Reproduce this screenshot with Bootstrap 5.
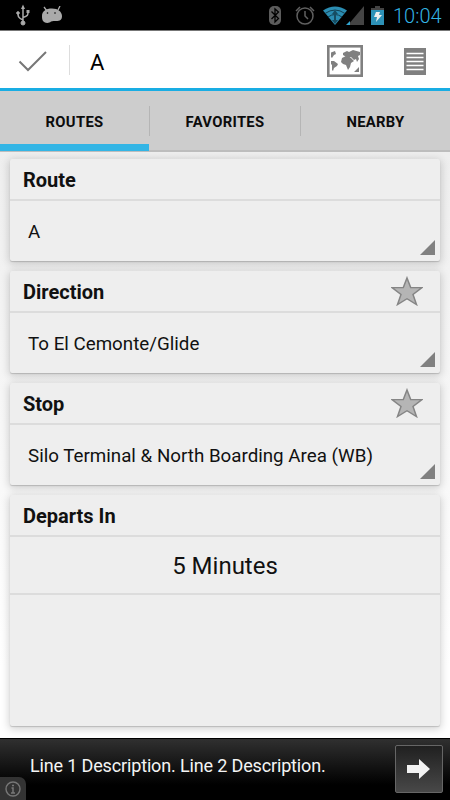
<!DOCTYPE html>
<html lang="en">
<head>
<meta charset="utf-8">
<meta name="viewport" content="width=device-width, initial-scale=1">
<title>Routes</title>
<link href="https://cdn.jsdelivr.net/npm/bootstrap@5.3.0/dist/css/bootstrap.min.css" rel="stylesheet">
<style>
body{font-family:Roboto,"Liberation Sans",sans-serif;color:#111;height:800px;overflow:hidden;background:#fff}
svg{display:block;flex:none}
.status{height:31px;background:#000;border-bottom:1px solid #777}
.usb{margin-left:16px}
.droid{margin-left:11px}
.clock{font-size:20px;line-height:30px;padding-top:2px;color:#33b5e5;font-weight:300;width:50px;margin:0 7px 0 1px;letter-spacing:0}
.actionbar{height:60px;border-bottom:3px solid #19ade3;background:#fff}
.check{margin:2px 0 0 18px}
.sep{width:1px;height:30px;margin-left:21px;background:#ddd}
.bar-title{font-size:22px;line-height:57px;padding-top:5px;margin-left:20px;color:#000}
.map-icon{margin-top:2px}
.list-icon{margin:3px 24px 0 41px}
.tabs{height:61px;background:#cdcdcd;border-bottom:2px solid #bdbdbd}
.tabs .nav-link{width:149px;height:60px;padding:1px 0 0;line-height:60px;font-size:14.8px;font-weight:700;color:#0c0c0c;border-radius:0;letter-spacing:.3px}
.tabs .nav-link.mid{width:150px}
.tabs .active{box-shadow:inset 0 -7px #33b5e5}
.tabsep{width:1px;height:30px;margin-top:15px;background:#b5b5b5}
.content{height:586px;padding:7px 10px 11px;background:linear-gradient(#eee,#fff 88%)}
.panel{height:102px;background:#eee;border:0;border-radius:2px;margin-bottom:10px;box-shadow:0 1px 1px rgba(0,0,0,.16),0 2px 9px 1px rgba(0,0,0,.18)}
.panel .card-header{height:42px;padding:1px 13px 0;background:none;border-bottom:2px solid #dcdcdc;font-size:20px;font-weight:700;line-height:41px}
.star{margin:4px 4px 0 auto}
.panel .choice{height:60px;padding:0 5px 6px 18px;font-size:18.75px;white-space:nowrap}
.choice span{line-height:46px}
.panel.tall{height:231px;margin:0}
.minutes{height:58px;font-size:24px;line-height:58px;border-bottom:2px solid #dcdcdc}
.ad{height:62px;background:linear-gradient(#303030,#000 75%);border-top:1px solid #000;color:#f4f4f4}
.ad-text{font-size:18px;line-height:53px;padding-left:30px;white-space:nowrap;letter-spacing:-.15px}
.go{width:48px;height:48px;margin:6px 7px 0 0;padding:0;border:1px solid #666;border-radius:2px;background:linear-gradient(#202020,#484848)}
.info{width:26px;height:23px;left:0;bottom:0;background:#333;border-top-right-radius:7px}
</style>
<script src="https://cdn.jsdelivr.net/npm/bootstrap@5.3.0/dist/js/bootstrap.bundle.min.js"></script>
</head>
<body class="d-flex flex-column">
<header class="status d-flex align-items-center">
 <svg class="usb" width="14" height="22" viewBox="0 0 14 22" fill="#aaa" stroke="#aaa"><path d="M7 3v16M7 16C2 14 2 12 2 9M7 13.500C12 12 12 11 12 8" fill="none" stroke-width="1.500"/><path d="M7 .5 9 5H5zM10.500 6h3v3h-3z" stroke="none"/><circle cx="2" cy="9" r="1.300"/><circle cx="7" cy="19" r="2"/></svg>
 <svg class="droid" width="22" height="18" viewBox="0 0 22 18"><path d="M3 1 6 5M19 0 17 4" stroke="#aaa" stroke-width="1.300"/><path d="M1 10C1 5 5 2.500 11 2.500S21 6 21 10s-2 5-6 5c-2 0-3-.5-5 .5-2 2-5 1.500-7 .5-2-1.500-2-4-2-6z" fill="#aaa"/><circle cx="6.500" cy="7" r=".8"/><circle cx="14" cy="7" r=".8"/></svg>
 <div class="d-flex align-items-center ms-auto">
 <svg width="123" height="31" viewBox="0 0 123 31"><rect x="0" y="6" width="12" height="19" rx="5" fill="#5c5c5c"/><path d="m2.500 11.500 7 7L6 22V9l3.500 3-7 7" stroke="#000" stroke-width="1.300" fill="none"/><g fill="none" stroke="#606060" stroke-width="1.500"><circle cx="36" cy="16" r="8"/><path d="M36 11v5l3 3M27 11l4-4M45 11l-4-4"/></g><path d="M54 10.500q12-8 24 0L66 25z" fill="#2b8db2"/><path d="M56 13.500q10-7 20 0M59 17q7-5 14 0" stroke="#123f50" fill="none"/><path d="m66 10 3 4h-2v6h2l-3 4-3-4h2v-6h-2z" fill="#174d62"/><path d="M79 25 95 6v19z" fill="#444"/><path d="m77 25 4-4v4z" fill="#33a5d0"/><path d="M102 8h4V6h5v2h4v17h-13z" fill="#2d91b7"/><path d="M102 8h4V6h5v2h4v2h-13z" fill="#444"/><path d="m107 12 4 0-1 3h3l-6 7 1-5h-3z" fill="#eee"/></svg>
 <div class="clock text-nowrap">10:04</div></div>
</header>
<div class="actionbar d-flex align-items-center">
 <svg class="check" width="30" height="24" viewBox="0 0 30 24"><path d="m1.500 12.500 8.500 8.500L28 3" stroke="#777" stroke-width="2" fill="none"/></svg>
 <div class="sep"></div>
 <div class="bar-title">A</div>
 <svg class="map-icon ms-auto" width="36" height="32" viewBox="0 0 36 32"><rect x="1.300" y="1.300" width="33.400" height="29.400" fill="#fff" stroke="#808080" stroke-width="2.600"/><path d="M4 7.500 8 6l1 3-2 1-2 3-1-1zM4 16l3 0 4 3-1 2-3 2-1 3-1-1 0-5-1-1zM15 13l4-2 5 2 3 3-3 2-1 4-2 3-2-5-3-1-2-2zM16 8l4-2 2 1 4-2 7 2v3l-2 1 1 3-2 3-1-3-2 1-3-3-3 1-5-3zM27 27l5-5v5z" fill="#808080"/></svg>
 <svg class="list-icon" width="22" height="27" viewBox="0 0 22 27"><path fill="#808080" d="M0 0h22v27H0z"/><path d="M2.500 5.500h17M2.500 9.500h17M2.500 13.500h17M2.500 17.500h17M2.500 21.500h17" stroke="#fff" stroke-width="1.500"/></svg>
</div>
<nav class="tabs nav flex-nowrap text-center">
 <a class="nav-link active" href="#">ROUTES</a><div class="tabsep"></div>
 <a class="nav-link mid" href="#">FAVORITES</a><div class="tabsep"></div>
 <a class="nav-link" href="#">NEARBY</a>
</nav>
<main class="content">
 <section class="card panel"><div class="card-header">Route</div>
  <div class="choice d-flex align-items-end"><span>A</span><svg class="ms-auto" width="15" height="15"><path d="M15 0v15H0z" fill="#808080"/></svg></div></section>
 <section class="card panel"><div class="card-header d-flex"><span>Direction</span><svg class="star" width="32" height="30" viewBox="0 0 32 31" preserveAspectRatio="none"><path d="m16 2 3.700 10H31l-9 7 3.500 10.500-9.500-6-9.500 6L10 19l-9-7h11.300z" fill="#b5b5b5" stroke="#858585" stroke-width="1.500"/></svg></div>
  <div class="choice d-flex align-items-end"><span>To El Cemonte/Glide</span><svg class="ms-auto" width="15" height="15"><path d="M15 0v15H0z" fill="#808080"/></svg></div></section>
 <section class="card panel"><div class="card-header d-flex"><span>Stop</span><svg class="star" width="32" height="30" viewBox="0 0 32 31" preserveAspectRatio="none"><path d="m16 2 3.700 10H31l-9 7 3.500 10.500-9.500-6-9.500 6L10 19l-9-7h11.300z" fill="#b5b5b5" stroke="#858585" stroke-width="1.500"/></svg></div>
  <div class="choice d-flex align-items-end"><span>Silo Terminal &amp; North Boarding Area (WB)</span><svg class="ms-auto" width="15" height="15"><path d="M15 0v15H0z" fill="#808080"/></svg></div></section>
 <section class="card panel tall"><div class="card-header">Departs In</div><div class="minutes text-center">5 Minutes</div></section>
</main>
<footer class="ad d-flex justify-content-between position-relative">
 <div class="ad-text">Line 1 Description. Line 2 Description.</div>
 <button class="go btn d-flex align-items-center justify-content-center" aria-label="Open"><svg width="24" height="20" viewBox="0 0 24 20"><path d="M0 6h12V0l11 10-11 10v-6H0z" fill="#f2f2f2"/></svg></button>
 <div class="info position-absolute d-flex align-items-center justify-content-center"><svg width="16" height="16" viewBox="0 0 16 16"><circle cx="8" cy="8" r="7" fill="none" stroke="#777" stroke-width="1.400"/><path d="M6.500 7h1.500V12M6 12h4M7 4.500h2" stroke="#777" stroke-width="1.500" fill="none"/></svg></div>
</footer>
</body>
</html>
